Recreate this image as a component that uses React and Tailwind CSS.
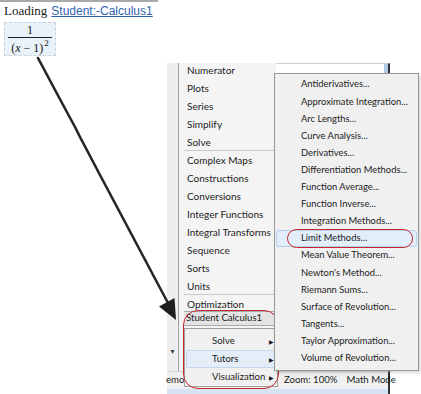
const mainItems = [
  { label: "Numerator" },
  { label: "Plots" },
  { label: "Series" },
  { label: "Simplify" },
  { label: "Solve", sep: true },
  { label: "Complex Maps" },
  { label: "Constructions" },
  { label: "Conversions" },
  { label: "Integer Functions" },
  { label: "Integral Transforms" },
  { label: "Sequence" },
  { label: "Sorts" },
  { label: "Units", sep: true },
  { label: "Optimization" },
];

const tutors = [
  "Antiderivatives...",
  "Approximate Integration...",
  "Arc Lengths...",
  "Curve Analysis...",
  "Derivatives...",
  "Differentiation Methods...",
  "Function Average...",
  "Function Inverse...",
  "Integration Methods...",
  "Limit Methods...",
  "Mean Value Theorem...",
  "Newton's Method...",
  "Riemann Sums...",
  "Surface of Revolution...",
  "Tangents...",
  "Taylor Approximation...",
  "Volume of Revolution...",
];

function Fraction() {
  return (
    <div className="ml-[4px] mt-[2px] w-[52px] h-[34px] flex flex-col items-center border border-dashed border-[#c9d3e0] bg-[#e9f1f9] font-['Liberation_Serif',serif] text-[12px] text-[#111]">
      <div className="h-[14px] leading-[14px]">1</div>
      <div className="w-[44px] h-px bg-[#222]" />
      <div className="mt-[1px] h-[16px] leading-[16px] whitespace-nowrap flex items-start">
        <span className="mt-[1px]">
          (<i>x</i> − 1)
        </span>
        <span className="text-[9px] leading-[9px] ml-px">2</span>
      </div>
    </div>
  );
}

function MainMenu() {
  return (
    <div className="w-[98px] flex flex-col bg-[#f4f4f4] border-l border-[#a0a0a0] overflow-hidden">
      <div className="-mt-[2px]">
        {mainItems.map((it) => (
          <div key={it.label}>
            <div className="h-[18px] flex items-center pl-[8px] whitespace-nowrap">{it.label}</div>
            {it.sep && <div className="-mt-px ml-[5px] h-px bg-[#cacaca]" />}
          </div>
        ))}
      </div>
      <div className="-mt-[2px] ml-[5px] h-[15px] flex items-center pl-[2px] bg-[#e3e3e3] border-y border-[#a9a9a9] text-[9.6px] whitespace-nowrap overflow-hidden">
        Student Calculus1
      </div>
    </div>
  );
}

function StudentMenu() {
  const rows = ["Solve", "Tutors", "Visualization"];
  return (
    <div className="absolute left-[17px] top-[265px] w-[94px] h-[59px] pt-[3px] bg-[#f0f0f0] border border-[#a0a0a0] text-[9.6px]">
      {rows.map((r) => (
        <div
          key={r}
          className={
            r === "Tutors"
              ? "h-[18px] mx-[1px] flex items-center justify-between pl-[25px] pr-[1px] rounded-[2px] border border-[#c2d7ef] bg-[#e4edf8]"
              : "h-[18px] mx-[1px] flex items-center justify-between pl-[25px] pr-[1px] border border-transparent"
          }
        >
          <span>{r}</span>
          <span className="text-[6px] text-[#111]">▶</span>
        </div>
      ))}
    </div>
  );
}

function TutorsMenu() {
  return (
    <div className="absolute left-[107px] top-[10px] w-[145px] h-[298px] pt-[2px] bg-[#f0f0f0] border border-[#979797] shadow-[2px_2px_3px_rgba(0,0,0,0.15)] text-[9.4px]">
      {tutors.map((t) => (
        <div
          key={t}
          className={
            t === "Limit Methods..."
              ? "h-[17.1px] mx-px flex items-center pl-[24px] rounded-[3px] border border-[#b3d0f0] bg-[#e3eefb] whitespace-nowrap"
              : "h-[17.1px] mx-px flex items-center pl-[24px] border border-transparent whitespace-nowrap"
          }
        >
          {t}
        </div>
      ))}
      <div className="absolute left-[12px] top-[155px] w-[126px] h-[19px] rounded-full border-[1.5px] border-[#c3262b]" />
    </div>
  );
}

function Window() {
  return (
    <div className="relative ml-[167px] mt-[7px] w-[223px] h-[332px] flex flex-col font-['Lato',sans-serif] text-[10px] text-[#1c1c1c]">
      <div className="flex flex-1 min-h-0">
        <div className="w-[11px] bg-[#eeeeee] flex flex-col justify-end items-center pb-[15px]">
          <span className="text-[7px] text-[#444]">▼</span>
        </div>
        <MainMenu />
        <div className="flex-1 flex border-t border-[#cfcfcf] border-r-2 border-r-[#333] bg-white">
          <div className="flex-1" />
          <div className="w-[4px] h-[10px] bg-[#b3cde8]" />
        </div>
      </div>
      <div className="h-[18px] flex items-center bg-[#f0f0f0] border-t border-[#d3d3d3] border-r-2 border-r-[#333] whitespace-nowrap text-[9.6px]">
        <span className="-ml-px">emor</span>
        <span className="ml-[96px]">Zoom: 100%</span>
        <span className="ml-[9px]">Math Mode</span>
      </div>
      <div className="h-[6px] bg-[#d6e3f3] border-r-2 border-r-[#333]" />
      <StudentMenu />
      <div className="absolute left-[16px] top-[247px] w-[96px] h-[79px] rounded-[15px] border-[1.5px] border-[#c3262b]" />
      <TutorsMenu />
    </div>
  );
}

function Arrow() {
  return (
    <svg className="absolute inset-0 pointer-events-none" width="421" height="394" viewBox="0 0 421 394">
      <polyline
        points="38,58 62,103 75,127 80,137 100,175 168,303"
        fill="none"
        stroke="#262626"
        strokeWidth="2.6"
        strokeLinecap="round"
        strokeLinejoin="round"
      />
      <polygon points="176,320 174.5,298 159,306.5" fill="#1e1e1e" />
    </svg>
  );
}

export default function App() {
  return (
    <div className="relative w-[421px] h-[394px] overflow-hidden bg-white">
      <div className="w-[158px] h-[2px] bg-[#a9a9a9]" />
      <div className="h-[18px] flex items-center gap-[4px] pl-[4px]">
        <span className="font-['Liberation_Serif',serif] text-[13px] text-[#222]">Loading</span>
        <span className="font-['Liberation_Sans',sans-serif] text-[12px] text-[#2f63b0] underline">
          Student:-Calculus1
        </span>
      </div>
      <Fraction />
      <Window />
      <Arrow />
    </div>
  );
}
